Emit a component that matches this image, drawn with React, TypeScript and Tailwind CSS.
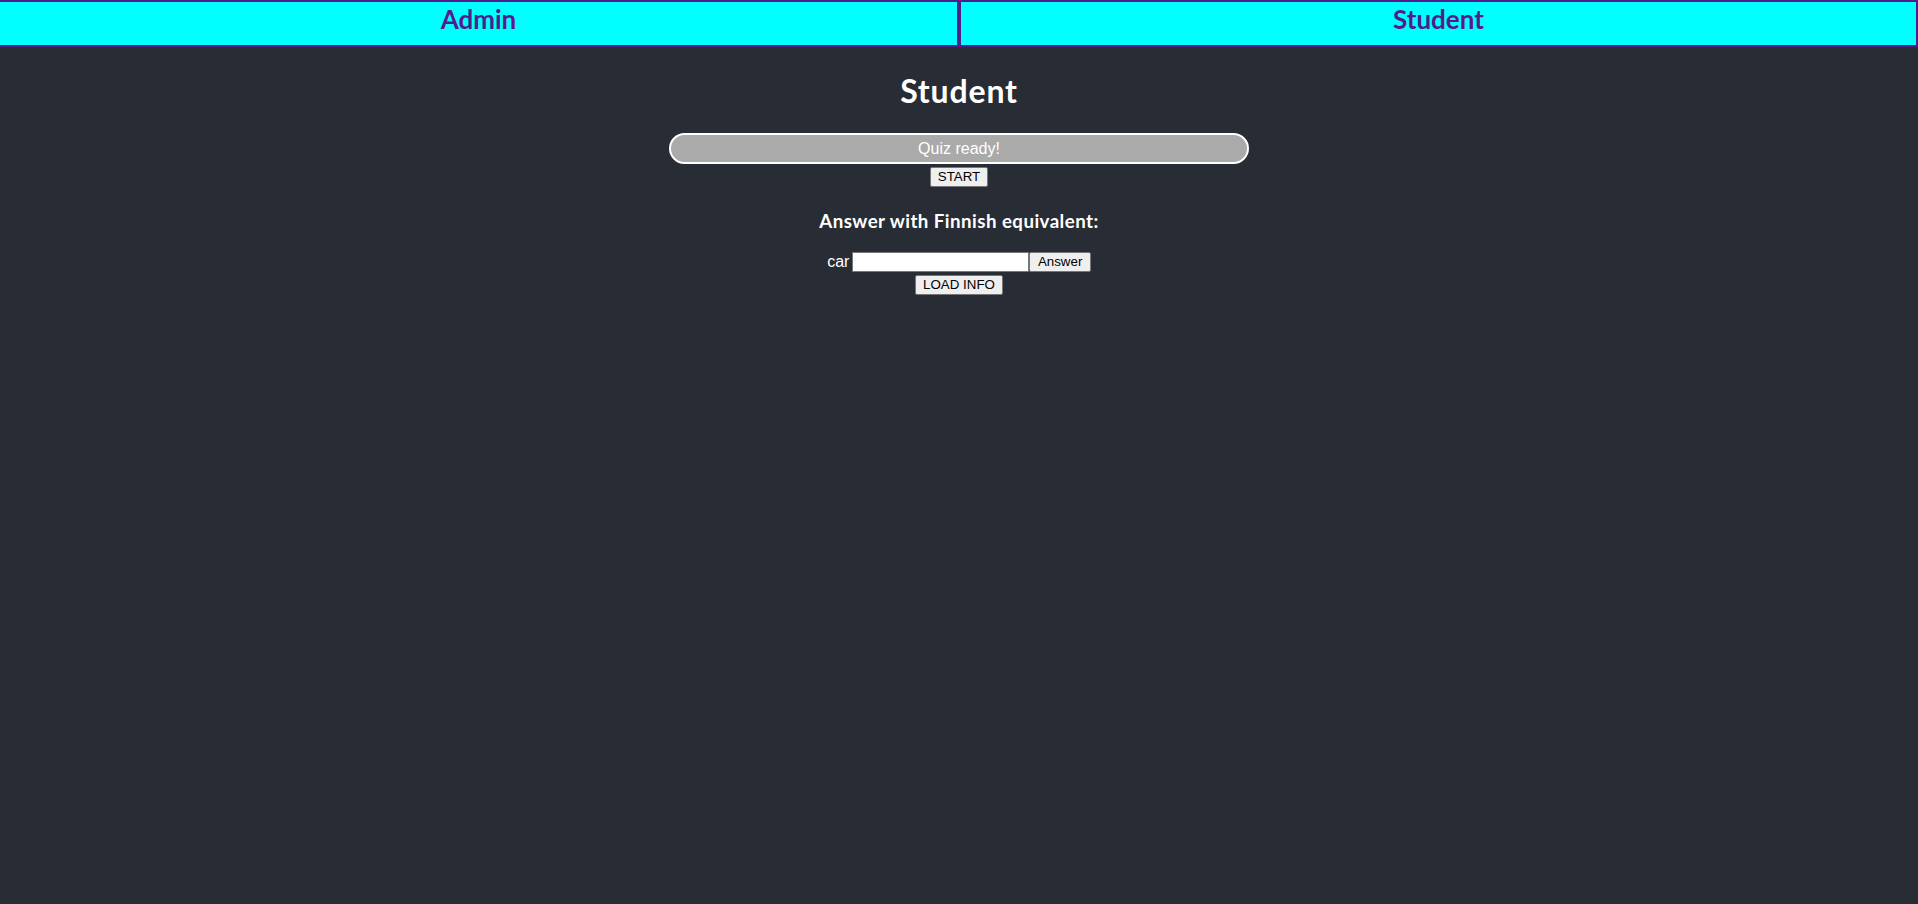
export default function App() {
  return (
    <div className="min-h-screen bg-[#282c34] text-white font-['Lato','Noto_Sans',sans-serif]">
      {/* top nav */}
      <nav className="flex h-[47px]">
        <a className="w-[959px] flex items-center justify-center pb-[8px] bg-[#00ffff] border-y-2 border-r-2 border-[#551a8b] text-[#551a8b] text-[26px] font-bold">
          Admin
        </a>
        <a className="flex-1 flex items-center justify-center pb-[8px] bg-[#00ffff] border-2 border-[#551a8b] text-[#551a8b] text-[26px] font-bold">
          Student
        </a>
      </nav>

      <div className="flex flex-col items-center">
        <h1 className="mt-[22px] mb-[21px] text-[32px] leading-[43px] tracking-[0.85px] font-bold">Student</h1>

        <div className="w-[580px] h-[31px] rounded-full border-2 border-white bg-[#aaaaaa] flex items-center justify-center font-['Liberation_Sans',Arial,sans-serif] text-[16px] leading-none">
          Quiz ready!
        </div>
        <button className="mt-[3px] h-[20px] px-[7px] bg-[#efefef] border border-[#767676] rounded-[2px] text-black text-[13.33px] leading-none font-['Liberation_Sans',Arial,sans-serif]">
          START
        </button>

        <h3 className="mt-[22px] mb-[16px] text-[18.72px] leading-[25px] tracking-[0.45px] font-bold">Answer with Finnish equivalent:</h3>

        <div className="flex items-center font-['Liberation_Sans',Arial,sans-serif] text-[16px]">
          <span className="mr-[3px]">car</span>
          <input className="w-[177px] h-[20px] bg-white border border-[#767676] px-[2px] text-black text-[13.33px]" />
          <button className="h-[20px] px-[7.5px] bg-[#efefef] border border-[#767676] rounded-[2px] text-black text-[13.33px] leading-none">
            Answer
          </button>
        </div>
        <button className="mt-[1px] h-[20px] px-[7.5px] bg-[#efefef] border border-[#767676] rounded-[2px] text-black text-[13.33px] leading-none font-['Liberation_Sans',Arial,sans-serif]">
          LOAD INFO
        </button>
      </div>
    </div>
  );
}
